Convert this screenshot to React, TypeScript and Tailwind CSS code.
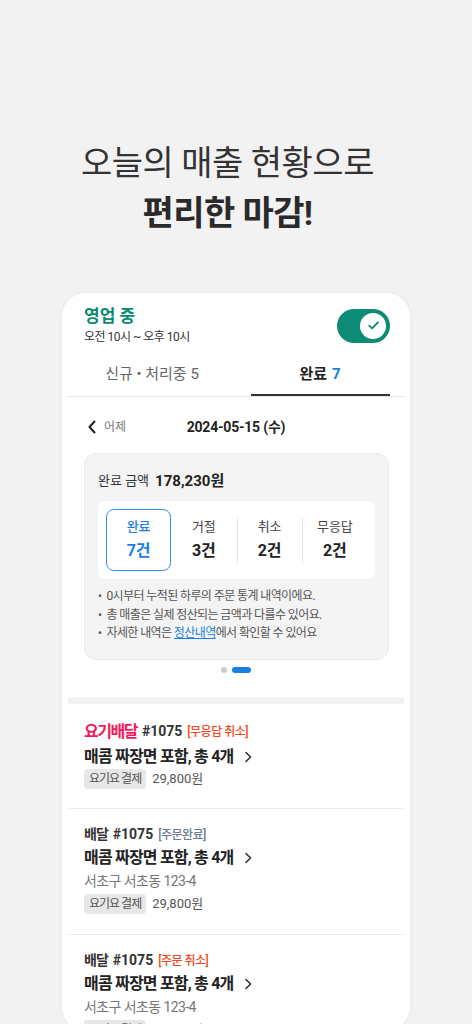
import React from "react";

const font = { fontFamily: 'Roboto, "Noto Sans CJK KR", "Noto Sans", sans-serif' };

function ChevronLeft() {
  return (
    <svg width="10" height="14" viewBox="0 0 10 14" fill="none">
      <path d="M7.5 1.5L2.5 7l5 5.5" stroke="#222" strokeWidth="2" strokeLinecap="round" strokeLinejoin="round" />
    </svg>
  );
}

function ChevronRight() {
  return (
    <svg width="8" height="12" viewBox="0 0 8 12" fill="none">
      <path d="M2 1.5L6.5 6 2 10.5" stroke="#333" strokeWidth="1.6" strokeLinecap="round" strokeLinejoin="round" />
    </svg>
  );
}

function Tag() {
  return (
    <span className="inline-flex h-[20px] items-center rounded-[4px] bg-[#e7e7e7] px-[5px] text-[12px] tracking-[-1px] text-[#555]">
      요기요 결제
    </span>
  );
}

function Order({
  first,
  brand,
  brandClass,
  status,
  statusClass,
  address,
}: {
  first?: boolean;
  brand: string;
  brandClass: string;
  status: string;
  statusClass: string;
  address?: string;
}) {
  return (
    <div className={`px-[16px] ${first ? "pt-[15px] pb-[19px]" : "pt-[15px] pb-[20px]"} border-b border-[#ebebeb]`}>
      <div className={`flex items-center gap-[5px] ${first ? "h-[26px]" : "h-[22px]"}`}>
        <span className={brandClass}>{brand}</span>
        <span className="text-[14px] font-bold text-[#333]">#1075</span>
        <span className={`text-[12px] font-medium tracking-[-0.5px] ${statusClass}`}>{status}</span>
      </div>
      <div className="flex h-[24px] items-center gap-[10px]">
        <span className="text-[16px] font-bold tracking-[-0.8px] text-[#222]">매콤 짜장면 포함, 총 4개</span>
        <ChevronRight />
      </div>
      {address && (
        <div className="flex h-[24px] items-center text-[14px] tracking-[-0.6px] text-[#777]">{address}</div>
      )}
      <div className="flex h-[20px] items-center gap-[6px]">
        <Tag />
        <span className="text-[13px] text-[#555]">29,800원</span>
      </div>
    </div>
  );
}

export default function App() {
  return (
    <div className="min-h-[1024px] w-full overflow-hidden bg-[#f2f2f2]" style={font}>
      <div className="pr-[17px] pt-[138px] text-center text-[34px] leading-[50px] text-[#333]">
        <div className="tracking-[-0.5px]">오늘의 매출 현황으로</div>
        <div className="font-bold tracking-[-0.6px] text-[#2a2a2a]">편리한 마감!</div>
      </div>

      <div className="mx-auto mt-[55px] h-[738px] w-[348px] overflow-hidden rounded-[24px] bg-white shadow-[0_0_4px_rgba(0,0,0,0.05)]">
        {/* header */}
        <div className="flex items-center justify-between pl-[22px] pr-[20px] pt-[13px]">
          <div>
            <div className="h-[20px] text-[17px] font-bold leading-[20px] text-[#0a8a70]">영업 중</div>
            <div className="mt-[3px] h-[16px] text-[12px] leading-[16px] tracking-[-0.5px] text-[#333]">오전 10시 ~ 오후 10시</div>
          </div>
          <div className="flex h-[34px] w-[53px] items-center justify-end rounded-full bg-[#0c8c74] pr-[4px]">
            <div className="flex h-[26px] w-[26px] items-center justify-center rounded-full bg-white">
              <svg width="11" height="9" viewBox="0 0 11 9" fill="none">
                <path d="M1.2 4.6L4.1 7.3 9.8 1.5" stroke="#0c8c74" strokeWidth="1.8" strokeLinecap="round" strokeLinejoin="round" />
              </svg>
            </div>
          </div>
        </div>

        {/* tabs */}
        <div className="mx-[6px] mt-[7px] flex border-b border-[#e8e8e8]">
          <div className="flex h-[44px] flex-1 items-center justify-center text-[15px] text-[#666]">
            신규 • 처리중 5
          </div>
          <div className="relative flex h-[44px] flex-1 items-center justify-center text-[15px] font-bold text-[#222]">
            완료<span className="ml-[5px] text-[#1a7fe0]">7</span>
            <div className="absolute bottom-0 left-[15px] right-[14px] h-[2px] bg-[#333]" />
          </div>
        </div>

        {/* date row */}
        <div className="mt-[15px] grid h-[30px] grid-cols-[1fr_auto_1fr] items-center px-[22px]">
          <div className="flex items-center gap-[7px] pl-[3px]">
            <ChevronLeft />
            <span className="text-[12px] text-[#777]">어제</span>
          </div>
          <div className="text-[14px] font-bold tracking-[-0.2px] text-[#222]">2024-05-15 (수)</div>
          <div />
        </div>

        {/* summary box */}
        <div className="ml-[22px] mr-[21px] mt-[11px] rounded-[12px] border border-[#ebebeb] bg-[#f4f4f4] px-[13px] pb-[16px] pt-[16px]">
          <div className="flex h-[22px] items-center gap-[6px]">
            <span className="text-[13px] text-[#333]">완료 금액</span>
            <span className="text-[15px] font-bold text-[#222]">178,230원</span>
          </div>
          <div className="mt-[9px] grid h-[78px] grid-cols-4 rounded-[8px] bg-white p-[8px]">
            <div className="flex flex-col items-center justify-center gap-[4px] rounded-[8px] border-[1.5px] border-[#3d8fe6]">
              <span className="h-[18px] text-[13px] font-medium leading-[18px] text-[#1a7fe0]">완료</span>
              <span className="h-[22px] text-[16px] font-bold leading-[22px] text-[#1a7fe0]">7건</span>
            </div>
            <div className="flex flex-col items-center justify-center gap-[4px]">
              <span className="h-[18px] text-[13px] leading-[18px] text-[#444]">거절</span>
              <span className="h-[22px] text-[16px] font-bold leading-[22px] text-[#222]">3건</span>
            </div>
            <div className="flex items-center">
              <div className="flex h-[45px] w-full flex-col items-center justify-center gap-[4px] border-l border-[#e6e6e6]">
                <span className="h-[18px] text-[13px] leading-[18px] text-[#444]">취소</span>
                <span className="h-[22px] text-[16px] font-bold leading-[22px] text-[#222]">2건</span>
              </div>
            </div>
            <div className="flex items-center">
              <div className="flex h-[45px] w-full flex-col items-center justify-center gap-[4px] border-l border-[#e6e6e6]">
                <span className="h-[18px] text-[13px] leading-[18px] text-[#444]">무응답</span>
                <span className="h-[22px] text-[16px] font-bold leading-[22px] text-[#222]">2건</span>
              </div>
            </div>
          </div>
          <ul className="mt-[8px] text-[12px] leading-[18.5px] tracking-[-0.6px] text-[#555]">
            <li className="flex gap-[5px]"><span>•</span><span>0시부터 누적된 하루의 주문 통계 내역이에요.</span></li>
            <li className="flex gap-[5px]"><span>•</span><span>총 매출은 실제 정산되는 금액과 다를수 있어요.</span></li>
            <li className="flex gap-[5px]"><span>•</span><span>자세한 내역은 <span className="text-[#1a7fe0] underline">정산내역</span>에서 확인할 수 있어요</span></li>
          </ul>
        </div>

        {/* dots */}
        <div className="mt-[7px] flex items-center justify-center gap-[5px]">
          <div className="h-[6px] w-[6px] rounded-full bg-[#cccccc]" />
          <div className="h-[6px] w-[19px] rounded-full bg-[#1a7fe0]" />
        </div>

        <div className="mx-[6px] mt-[24px] h-[7px] bg-[#f2f2f2]" />

        <div className="mx-[6px]">
          <Order
            first
            brand="요기배달"
            brandClass="text-[16px] font-bold tracking-[-1.5px] text-[#f5195c]"
            status="[무응답 취소]"
            statusClass="text-[#f0491f]"
          />
          <Order
            brand="배달"
            brandClass="text-[14px] font-bold tracking-[-1px] text-[#333]"
            status="[주문완료]"
            statusClass="text-[#6b7b93]"
            address="서초구 서초동 123-4"
          />
          <Order
            brand="배달"
            brandClass="text-[14px] font-bold tracking-[-1px] text-[#333]"
            status="[주문 취소]"
            statusClass="text-[#f0491f]"
            address="서초구 서초동 123-4"
          />
        </div>
      </div>
    </div>
  );
}
